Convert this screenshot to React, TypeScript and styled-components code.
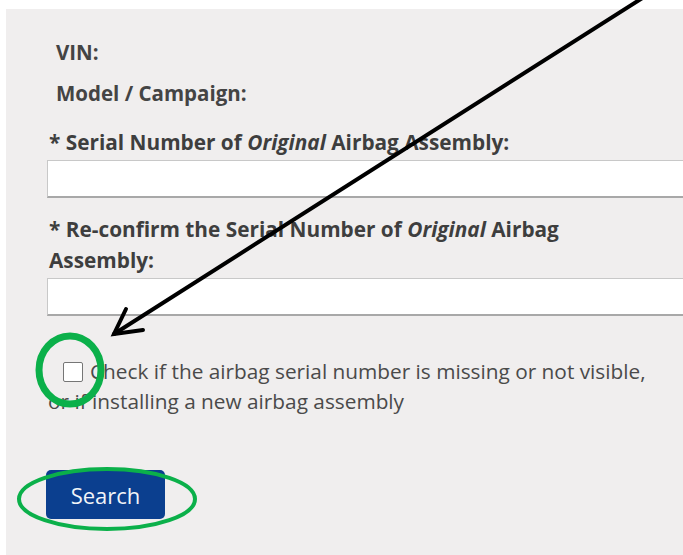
import React from 'react'
import styled, { createGlobalStyle } from 'styled-components'

const GlobalStyle = createGlobalStyle`
  html, body {
    margin: 0;
    padding: 0;
    background: #ffffff;
    overflow: hidden;
  }
  body {
    font-family: 'Open Sans', 'Liberation Sans', Arial, sans-serif;
  }
`

const Page = styled.div`
  position: relative;
  width: 683px;
  height: 555px;
  padding: 9px 0 0 6px;
  box-sizing: border-box;
`

const Panel = styled.div`
  width: 720px;
  height: 546px;
  background: #f0eeee;
  padding: 31px 0 0 41px;
  box-sizing: border-box;
`

const InfoLine = styled.div`
  margin: 0 0 17px 9px;
  font-size: 20.5px;
  line-height: 24px;
  font-weight: 700;
  color: #444444;
`

const FieldLabel = styled.label<{ $gap: number }>`
  display: block;
  max-width: 560px;
  margin: ${(p) => p.$gap}px 0 2px 2px;
  font-size: 20.8px;
  line-height: 31px;
  font-weight: 700;
  color: #3e3e3e;

  em {
    font-style: italic;
  }
`

const TextInput = styled.input`
  display: block;
  width: 680px;
  height: 38px;
  margin: 0;
  padding: 0 10px;
  box-sizing: border-box;
  background: #ffffff;
  border: 1px solid #c8c8c8;
  border-bottom: 2px solid #a8a8a8;
  border-radius: 0;
  outline: none;
`

const CheckRow = styled.label`
  display: block;
  width: 615px;
  margin: 40px 0 0 1px;
  font-size: 20.8px;
  line-height: 30px;
  color: #4a4a4a;
`

const CheckBox = styled.span`
  display: inline-block;
  width: 20px;
  height: 20px;
  margin: 0 7px 0 15px;
  vertical-align: -3px;
  background: #ffffff;
  border: 1px solid #767676;
  border-radius: 2px;
  box-sizing: border-box;
`

const SearchButton = styled.button`
  display: block;
  width: 119px;
  height: 49px;
  margin: 54px 0 0 -1px;
  background: #0b3f8f;
  border: none;
  border-radius: 5px;
  color: #f2f4f8;
  font-family: 'Open Sans', 'Liberation Sans', Arial, sans-serif;
  font-size: 22px;
  cursor: pointer;
`

const Markup = styled.svg`
  position: absolute;
  left: 0;
  top: 0;
  width: 683px;
  height: 555px;
  pointer-events: none;
`

export default function App() {
  return (
    <>
      <GlobalStyle />
      <Page>
        <Panel>
          <InfoLine>VIN:</InfoLine>
          <InfoLine>Model / Campaign:</InfoLine>

          <FieldLabel $gap={22}>
            * Serial Number of <em>Original</em> Airbag Assembly:
          </FieldLabel>
          <TextInput type="text" />

          <FieldLabel $gap={16}>
            * Re-confirm the Serial Number of <em>Original</em> Airbag Assembly:
          </FieldLabel>
          <TextInput type="text" />

          <CheckRow>
            <CheckBox />
            Check if the airbag serial number is missing or not visible, or if installing a new airbag assembly
          </CheckRow>

          <SearchButton type="button">Search</SearchButton>
        </Panel>

        {/* callouts drawn over the form */}
        <Markup viewBox="0 0 683 555">
          <g stroke="#000" strokeWidth="4" strokeLinecap="round" fill="none">
            <line x1="644" y1="-3" x2="114" y2="334" />
            <polyline points="143,330 114,334 126,309" strokeLinejoin="miter" />
          </g>
          <ellipse cx="70" cy="370" rx="31" ry="34" stroke="#0bb04a" strokeWidth="7" fill="none" />
          <ellipse cx="107" cy="499" rx="88" ry="30" stroke="#0bb04a" strokeWidth="4" fill="none" />
        </Markup>
      </Page>
    </>
  )
}
